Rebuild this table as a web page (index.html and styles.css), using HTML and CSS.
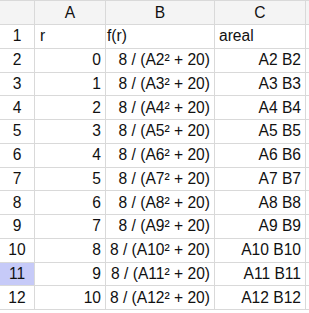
FILE: index.html
```html
<!DOCTYPE html>
<html>
<head>
<meta charset="utf-8">
<link rel="stylesheet" href="styles.css">
</head>
<body>
<div class="sheet">
  <div class="hd corner"></div><div class="hd">A</div><div class="hd">B</div><div class="hd">C</div><div class="hd edge"></div>

  <div class="rh">1</div><div class="c l pa">r</div><div class="c l pb">f(r)</div><div class="c l pc">areal</div><div class="c edge"></div>
  <div class="rh">2</div><div class="c r">0</div><div class="c r">8 / (A2² + 20)</div><div class="c r">A2 B2</div><div class="c edge"></div>
  <div class="rh">3</div><div class="c r">1</div><div class="c r">8 / (A3² + 20)</div><div class="c r">A3 B3</div><div class="c edge"></div>
  <div class="rh">4</div><div class="c r">2</div><div class="c r">8 / (A4² + 20)</div><div class="c r">A4 B4</div><div class="c edge"></div>
  <div class="rh">5</div><div class="c r">3</div><div class="c r">8 / (A5² + 20)</div><div class="c r">A5 B5</div><div class="c edge"></div>
  <div class="rh">6</div><div class="c r">4</div><div class="c r">8 / (A6² + 20)</div><div class="c r">A6 B6</div><div class="c edge"></div>
  <div class="rh">7</div><div class="c r">5</div><div class="c r">8 / (A7² + 20)</div><div class="c r">A7 B7</div><div class="c edge"></div>
  <div class="rh">8</div><div class="c r">6</div><div class="c r">8 / (A8² + 20)</div><div class="c r">A8 B8</div><div class="c edge"></div>
  <div class="rh">9</div><div class="c r">7</div><div class="c r">8 / (A9² + 20)</div><div class="c r">A9 B9</div><div class="c edge"></div>
  <div class="rh">10</div><div class="c r">8</div><div class="c r">8 / (A10² + 20)</div><div class="c r">A10 B10</div><div class="c edge"></div>
  <div class="rh sel">11</div><div class="c r">9</div><div class="c r">8 / (A11² + 20)</div><div class="c r">A11 B11</div><div class="c edge"></div>
  <div class="rh">12</div><div class="c r">10</div><div class="c r">8 / (A12² + 20)</div><div class="c r">A12 B12</div><div class="c edge"></div>
</div>
</body>
</html>
```
FILE: styles.css
```css
html, body {
  margin: 0;
  padding: 0;
  background: #ffffff;
}
.sheet {
  display: grid;
  grid-template-columns: 35px 71px 109px 91px 1fr;
  grid-template-rows: 25px repeat(12, 23.75px);
  width: 309px;
  font-family: "Liberation Sans", Arial, sans-serif;
  font-size: 15.6px;
  color: #111111;
}
.sheet > div {
  box-sizing: border-box;
  border-right: 1px solid #d9d9d9;
  border-bottom: 1px solid #d9d9d9;
  display: flex;
  align-items: center;
  white-space: nowrap;
  overflow: hidden;
}
.hd {
  background: #f4f4f4;
  border-top: 1px solid #d9d9d9;
  justify-content: center;
}
.rh {
  justify-content: center;
  background: #ffffff;
}
.rh.sel {
  background: #c6caf8;
}
.edge {
  border-right: none !important;
}
.c.l {
  justify-content: flex-start;
  padding-left: 5px;
}
.c.pb {
  padding-left: 1px;
}
.c.pc {
  padding-left: 4px;
}
.c.r {
  justify-content: flex-end;
  padding-right: 4px;
}
```
